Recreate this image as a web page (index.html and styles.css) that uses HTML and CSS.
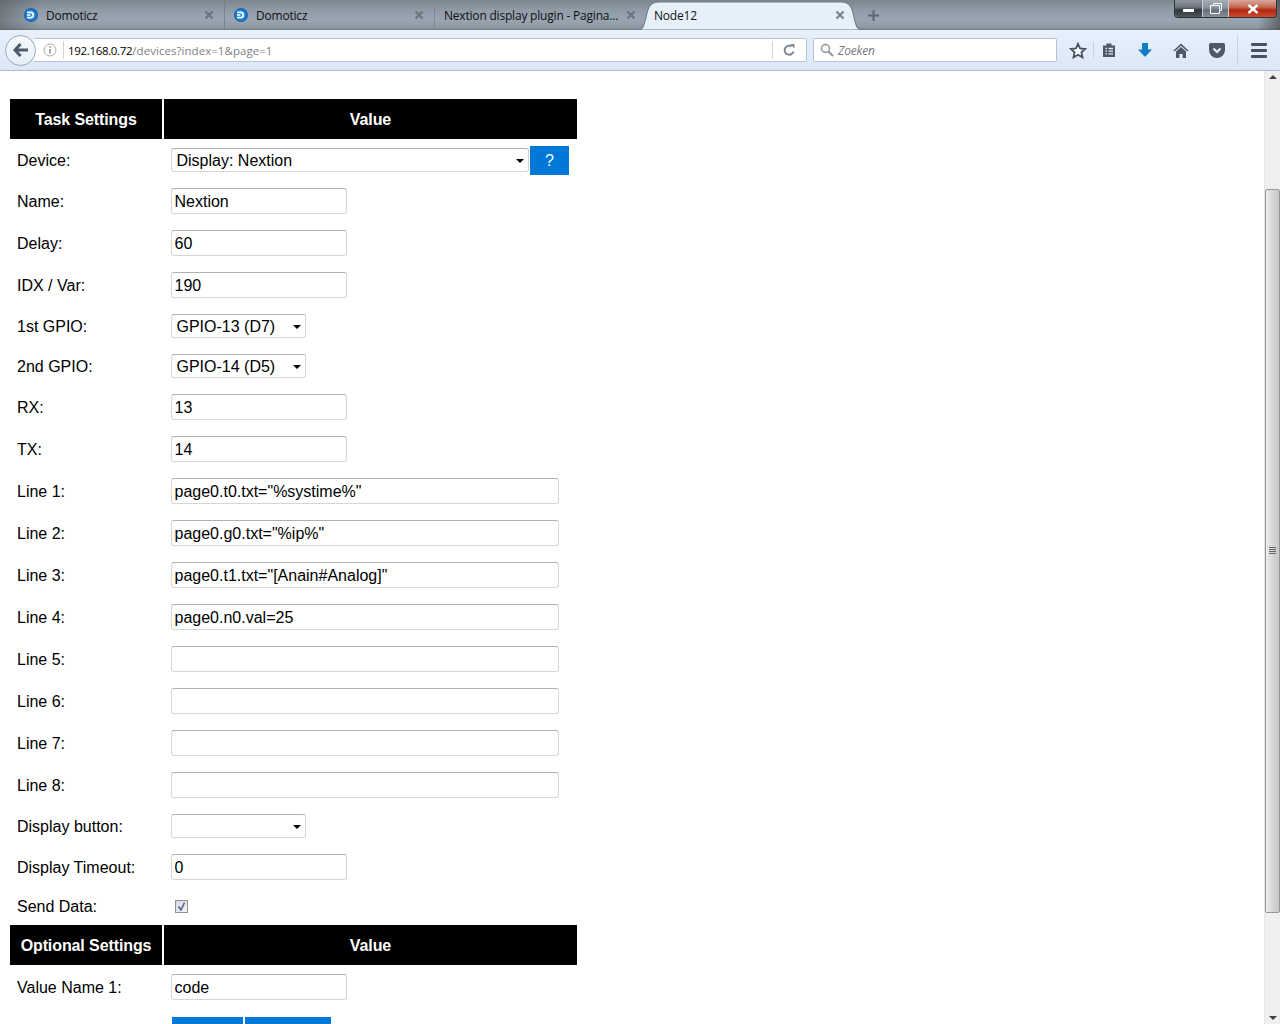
FILE: index.html
```html
<!DOCTYPE html>
<html lang="nl">
<head>
<meta charset="utf-8">
<title>Node12</title>
<link rel="stylesheet" href="styles.css">
</head>
<body>
<div class="app">
  <header class="tabstrip">
    <div class="tab">
      <svg class="favicon" viewBox="0 0 14 14"><circle cx="7" cy="7" r="7" fill="#1668b8"/><circle cx="7" cy="7" r="5.2" fill="#1f86d8"/><path d="M3 4.400h3.700a2.600 2.600 0 0 1 0 5.200H3M3 7h3.500" fill="none" stroke="#fff" stroke-width="1.700"/></svg>
      <span class="tab-title">Domoticz</span>
      <svg class="tab-close" viewBox="0 0 10 10"><path d="M1.500 1.500l7 7M8.500 1.500l-7 7" stroke="#6b747d" stroke-width="2.200"/></svg>
    </div>
    <div class="tab">
      <svg class="favicon" viewBox="0 0 14 14"><circle cx="7" cy="7" r="7" fill="#1668b8"/><circle cx="7" cy="7" r="5.2" fill="#1f86d8"/><path d="M3 4.400h3.700a2.600 2.600 0 0 1 0 5.200H3M3 7h3.500" fill="none" stroke="#fff" stroke-width="1.700"/></svg>
      <span class="tab-title">Domoticz</span>
      <svg class="tab-close" viewBox="0 0 10 10"><path d="M1.500 1.500l7 7M8.500 1.500l-7 7" stroke="#6b747d" stroke-width="2.200"/></svg>
    </div>
    <div class="tab tab-last">
      <span class="tab-title">Nextion display plugin - Pagina...</span>
      <svg class="tab-close" viewBox="0 0 10 10"><path d="M1.500 1.500l7 7M8.500 1.500l-7 7" stroke="#6b747d" stroke-width="2.200"/></svg>
    </div>
    <div class="tab tab-active">
      <svg class="tab-shape" viewBox="0 0 226 28" preserveAspectRatio="none"><path d="M0 28C6 28 7 24 9 16 11 6 13 1 22 1H204C213 1 215 6 217 16 219 24 220 28 226 28Z" fill="#e6f0fb" stroke="#6f7a85"/></svg>
      <span class="tab-title">Node12</span>
      <svg class="tab-close" viewBox="0 0 10 10"><path d="M1.500 1.500l7 7M8.500 1.500l-7 7" stroke="#7b8691" stroke-width="2.200"/></svg>
    </div>
    <svg class="newtab" viewBox="0 0 11 11"><path d="M5.500 0v11M0 5.500h11" stroke="#5d6772" stroke-width="2"/></svg>
    <div class="winctl">
      <div class="winbtn win-min"><span class="min-bar"></span></div>
      <div class="winbtn win-max"><svg width="12" height="11" viewBox="0 0 12 11"><path d="M3.500 2.500V.5h8v7h-2M.5 2.500h9v8h-9z" fill="none" stroke="#fff"/></svg></div>
      <div class="winbtn win-close"><svg width="12" height="10" viewBox="0 0 12 10"><path d="M1.500 1l9 8M10.500 1l-9 8" stroke="#fff" stroke-width="2.400"/></svg></div>
    </div>
  </header>

  <nav class="toolbar">
    <div class="backbtn">
      <svg width="16" height="14" viewBox="0 0 16 14"><path d="M7.500 1L2 7l5.500 6M2.500 7H15" fill="none" stroke="#4d5a68" stroke-width="3"/></svg>
    </div>
    <div class="urlbar">
      <svg class="info" width="14" height="14" viewBox="0 0 14 14"><circle cx="7" cy="7" r="6" fill="none" stroke="#a6a9ac"/><path d="M7 6v4.500M7 3.300v1.500" stroke="#8d9094" stroke-width="1.500"/></svg>
      <span class="urlsep"></span>
      <span class="url"><span class="host">192.168.0.72</span>/devices?index=1&amp;page=1</span>
      <span class="urlsep reload-sep"></span>
      <svg class="reload" width="12" height="12" viewBox="0 0 12 12"><path d="M10.500 7.500A4.500 4.500 0 1 1 8.500 2.300" fill="none" stroke="#7d8894" stroke-width="2"/><path d="M7 0l4.500 0v4.500z" fill="#7d8894"/></svg>
    </div>
    <div class="searchbar">
      <svg width="14" height="14" viewBox="0 0 14 14"><circle cx="5.500" cy="5.500" r="4" fill="none" stroke="#8b949d" stroke-width="1.500"/><path d="M8.500 8.500l4.500 4.500" stroke="#8b949d" stroke-width="2"/></svg>
      <span class="search-text">Zoeken</span>
    </div>
    <div class="tools">
      <svg class="tool-star" width="18" height="17" viewBox="0 0 18 17"><path d="M9 1.800l2.100 4.700 5.100.5-3.800 3.400 1.100 5-4.500-2.600-4.500 2.600 1.100-5L1.800 7l5.100-.5z" fill="#fff" stroke="#46525f" stroke-width="1.800"/></svg>
      <span class="toolsep"></span>
      <svg class="tool-list" width="16" height="16" viewBox="0 0 16 16"><path d="M5.500 1.500h5v2h3.500v11.500H2V3.500h3.500z" fill="#4d5965"/><path d="M4.500 6.500h1.500M7.500 6.500h4.500M4.500 9.200h1.500M7.500 9.200h4.500M4.500 11.900h1.500M7.500 11.900h4.500" stroke="#e6f0fb" stroke-width="1.300"/></svg>
      <svg class="tool-down" width="16" height="16" viewBox="0 0 16 16"><path d="M5 1h6v6.500h4L8 15 1 7.500h4z" fill="#0f7ec6"/></svg>
      <svg class="tool-home" width="16" height="15" viewBox="0 0 16 15"><path d="M8 .5L0 8h2.200L8 2.800 13.800 8H16z" fill="#4d5965"/><path d="M3 8.500L8 4l5 4.500V15H9.600v-4H6.400v4H3z" fill="#4d5965"/></svg>
      <svg class="tool-pocket" width="16" height="15" viewBox="0 0 16 15"><path d="M1.500 0h13A1.500 1.500 0 0 1 16 1.500V7a8 8 0 0 1-16 0V1.500A1.500 1.500 0 0 1 1.500 0z" fill="#4d5965"/><path d="M4.500 5.500L8 9l3.500-3.500" fill="none" stroke="#e6f0fb" stroke-width="2.200"/></svg>
      <span class="toolsep toolsep-tall"></span>
      <div class="menu"><span></span><span></span><span></span></div>
    </div>
  </nav>

  <div class="viewport">
    <main class="page">
      <form>
        <table class="settings">
          <tbody>
            <tr><th class="col-a">Task Settings</th><th>Value</th></tr>
            <tr class="row-device">
              <td>Device:</td>
              <td><div class="device-wrap">
                <span class="select select-wide"><select><option>Display: Nextion</option></select></span>
                <a class="help">?</a>
              </div></td>
            </tr>
            <tr><td>Name:</td><td><input class="field" value="Nextion"></td></tr>
            <tr><td>Delay:</td><td><input class="field" value="60"></td></tr>
            <tr><td>IDX / Var:</td><td><input class="field" value="190"></td></tr>
            <tr><td>1st GPIO:</td><td><span class="select"><select><option>GPIO-13 (D7)</option></select></span></td></tr>
            <tr><td>2nd GPIO:</td><td><span class="select"><select><option>GPIO-14 (D5)</option></select></span></td></tr>
            <tr><td>RX:</td><td><input class="field" value="13"></td></tr>
            <tr><td>TX:</td><td><input class="field" value="14"></td></tr>
            <tr><td>Line 1:</td><td><input class="field field-long" value="page0.t0.txt=&quot;%systime%&quot;"></td></tr>
            <tr><td>Line 2:</td><td><input class="field field-long" value="page0.g0.txt=&quot;%ip%&quot;"></td></tr>
            <tr><td>Line 3:</td><td><input class="field field-long" value="page0.t1.txt=&quot;[Anain#Analog]&quot;"></td></tr>
            <tr><td>Line 4:</td><td><input class="field field-long" value="page0.n0.val=25"></td></tr>
            <tr><td>Line 5:</td><td><input class="field field-long"></td></tr>
            <tr><td>Line 6:</td><td><input class="field field-long"></td></tr>
            <tr><td>Line 7:</td><td><input class="field field-long"></td></tr>
            <tr><td>Line 8:</td><td><input class="field field-long"></td></tr>
            <tr><td>Display button:</td><td><span class="select"><select><option></option></select></span></td></tr>
            <tr><td>Display Timeout:</td><td><input class="field" value="0"></td></tr>
            <tr class="row-check">
              <td>Send Data:</td>
              <td><span class="check"><svg width="9" height="9" viewBox="0 0 9 9"><path d="M1.500 4.500L4 8l3.500-7.500" fill="none" stroke="#4f5f9c" stroke-width="1.600"/></svg></span></td>
            </tr>
            <tr><th class="col-a">Optional Settings</th><th>Value</th></tr>
            <tr class="row-after-head"><td>Value Name 1:</td><td><input class="field" value="code"></td></tr>
            <tr class="row-buttons">
              <td></td>
              <td><div class="actions"><a class="action action-close"></a><a class="action action-submit"></a></div></td>
            </tr>
          </tbody>
        </table>
      </form>
    </main>
    <aside class="scrollbar">
      <span class="arrow arrow-up"></span>
      <div class="thumb"><span class="grip"></span></div>
      <span class="arrow arrow-down"></span>
    </aside>
  </div>
</div>
</body>
</html>
```

FILE: styles.css
```css
* { box-sizing: border-box; }
html, body { margin: 0; height: 100%; overflow: hidden; background: #fff; }
.app { display: flex; flex-direction: column; height: 1024px; width: 1280px; }

/* tab strip */
.tabstrip {
  display: flex; align-items: flex-start; height: 30px; padding-left: 15px; position: relative;
  background:
    linear-gradient(90deg, rgba(70,70,70,.45) 0, rgba(70,70,70,0) 40px),
    linear-gradient(270deg, rgba(60,60,60,.6) 0, rgba(60,60,60,0) 22px),
    linear-gradient(180deg, #7b858f 0, #8f9ba6 10px, #99a6b1 20px, #8b97a2 28px, #6e7881 30px);
  font: 12px "Open Sans", "Noto Sans", sans-serif; color: #111;
}
.tab { width: 210px; height: 30px; padding: 0 10px 0 9px; display: flex; align-items: center; gap: 8px; position: relative; border-right: 1px solid #7f8993; background-clip: padding-box; }
.tab:first-child { border-right-color: #78828c; }
.tab-last { border-right: 0; }
.tab-active { border-right: 0; }
.tab-title { flex: 1; white-space: nowrap; position: relative; letter-spacing: -.2px; }
.favicon { width: 14px; height: 14px; flex: none; margin-right: 0; }
.tab-close { width: 10px; height: 10px; flex: none; position: relative; }
.tab-shape { position: absolute; left: -8px; top: 1px; width: 226px; height: 29px; }
.newtab { width: 11px; height: 11px; margin: 10px 0 0 13px; flex: none; }
.winctl { display: flex; position: absolute; right: 3px; top: 0; height: 18px; border: 1px solid #2e3338; border-top: 0; border-radius: 0 0 4px 4px; overflow: hidden; }
.winbtn { display: flex; align-items: center; justify-content: center; height: 17px; border-right: 1px solid #c9ced2; }
.win-min { width: 28px; background: linear-gradient(#8d969e 0, #6f7880 40%, #2f363c 60%, #4d565e 100%); }
.min-bar { width: 11px; height: 3px; background: #fff; margin-top: 3px; }
.win-max { width: 26px; background: linear-gradient(#a4aeb7 0, #8a949d 45%, #66707a 60%, #87919a 100%); }
.win-close { width: 47px; border-right: 0; background: linear-gradient(#d9a79b 0, #c56b58 40%, #b2270f 60%, #cb4c30 100%); }

/* toolbar */
.toolbar {
  display: flex; align-items: center; height: 41px; padding: 0 11px 0 5px; flex: none;
  background: linear-gradient(#e7f0fb, #dce8f7); border-bottom: 1px solid #a9bdd3;
  font: 12px "Open Sans", "Noto Sans", sans-serif;
}
.backbtn { width: 31px; height: 31px; border-radius: 50%; border: 1px solid #9aaabb; background: linear-gradient(#f8fbff, #e3edf9); display: flex; align-items: center; justify-content: center; position: relative; z-index: 1; flex: none; }
.urlbar { width: 773px; height: 24px; margin-left: -2px; background: #fff; border: 1px solid #b4c4d5; border-left: 0; border-radius: 0 2px 2px 0; display: flex; align-items: center; padding-left: 9px; }
.info { flex: none; }
.urlsep { width: 1px; height: 18px; background: #d0d5da; margin-left: 6px; flex: none; }
.url { margin-left: 4px; color: #7c7f83; font-size: 11.5px; letter-spacing: .05px; white-space: nowrap; flex: 1; }
.host { color: #000; letter-spacing: -.33px; }
.reload-sep { margin: 0; }
.reload { margin: 0 11px 0 10px; flex: none; }
.searchbar { width: 244px; height: 24px; margin-left: 6px; background: #fff; border: 1px solid #b4c4d5; border-radius: 2px; display: flex; align-items: center; padding-left: 6px; gap: 4px; flex: none; }
.search-text { font-style: italic; color: #74787d; font-size: 12px; letter-spacing: -.2px; }
.tools { display: flex; align-items: center; margin-left: 12px; height: 100%; }
.toolsep { width: 1px; height: 16px; background: #c6d2df; margin: 0 7px 0 6px; flex: none; }
.toolsep-tall { height: 30px; margin: 0 13px 0 12px; }
.tool-down { margin-left: 20px; }
.tool-home { margin-left: 20px; }
.tool-pocket { margin-left: 20px; }
.menu { display: flex; flex-direction: column; gap: 3px; width: 16px; }
.menu span { height: 3px; background: #46525f; border-radius: 1px; }

/* page */
.viewport { flex: 1; display: flex; min-height: 0; }
.page { flex: 1; overflow: hidden; padding: 28px 0 0 10px; font: 16px "Liberation Sans", Arial, sans-serif; color: #000; }
.settings { width: 567px; border-collapse: separate; border-spacing: 0; table-layout: fixed; }
.settings th { height: 40px; padding: 2px 0 0; background: #000; color: #fff; font-weight: bold; text-align: center; letter-spacing: -.1px; }
.settings th.col-a { width: 154px; border-right: 2px solid #fff; }
.settings td { padding: 8px 0 8px 7px; line-height: 0; vertical-align: middle; }
.settings td:first-child { line-height: 18px; padding-top: 9px; padding-bottom: 7px; }

.field { display: block; width: 176px; height: 26px; padding: 2px 2.5px 0; border: 1px solid #d6d6d6; border-top-color: #b0b0b0; border-radius: 3px; font: 16px "Liberation Sans", Arial, sans-serif; color: #000; background: #fff; }
.field-long { width: 388px; }

.select { display: block; position: relative; width: 135px; height: 24px; }
.select-wide { width: 358px; flex: none; margin-top: 2px; }
.select::after { content: ""; position: absolute; right: 5px; top: 11px; border: 4px solid transparent; border-top-color: #000; border-bottom: 0; pointer-events: none; }
.select select { display: block; appearance: none; width: 100%; height: 100%; padding: 0 0 0 4.5px; border: 1px solid #d6d6d6; border-top-color: #b0b0b0; border-radius: 3px; background: #fff; font: 16px "Liberation Sans", Arial, sans-serif; color: #000; }

.settings .row-device td { padding-top: 7px; padding-bottom: 5px; }
.device-wrap { display: flex; align-items: flex-start; gap: 1px; }
.help { display: block; width: 39px; height: 29px; background: #0078d7; color: #fff; text-align: center; font-size: 16px; line-height: 29px; }

.row-check td { padding-top: 12px; padding-bottom: 12px; }
.settings .row-check td:first-child { padding-top: 10px; padding-bottom: 9px; }
.check { display: flex; align-items: center; justify-content: center; width: 13px; height: 13px; margin-left: 4px; border: 1px solid #8e8f8f; background: linear-gradient(135deg, #d6d9dd, #f4f4f6); }

.row-after-head td { padding-top: 9px; }
.row-buttons td { padding-top: 9px; padding-bottom: 0; }
.actions { display: flex; gap: 2px; margin-left: 1px; }
.action { display: block; height: 38px; background: #0078d7; }
.action-close { width: 71px; }
.action-submit { width: 86px; }

/* scrollbar */
.scrollbar { width: 16px; flex: none; background: #f0f0f0; border-left: 1px solid #e6e6e6; display: flex; flex-direction: column; align-items: center; position: relative; }
.arrow { position: absolute; left: 4px; border: 4px solid transparent; }
.arrow-up { top: 4px; border-top: 0; border-bottom-color: #404040; }
.arrow-down { bottom: 4px; border-bottom: 0; border-top-color: #404040; }
.thumb { width: 15px; height: 724px; margin-top: 118px; margin-left: 0; border: 1px solid #979797; border-radius: 2px; background: linear-gradient(90deg, #eee, #d8d8d8 45%, #c8c8c8); display: flex; align-items: center; justify-content: center; }
.grip { width: 7px; height: 7px; margin-bottom: 2px; background: repeating-linear-gradient(#666 0 1px, transparent 1px 2px); }
```
